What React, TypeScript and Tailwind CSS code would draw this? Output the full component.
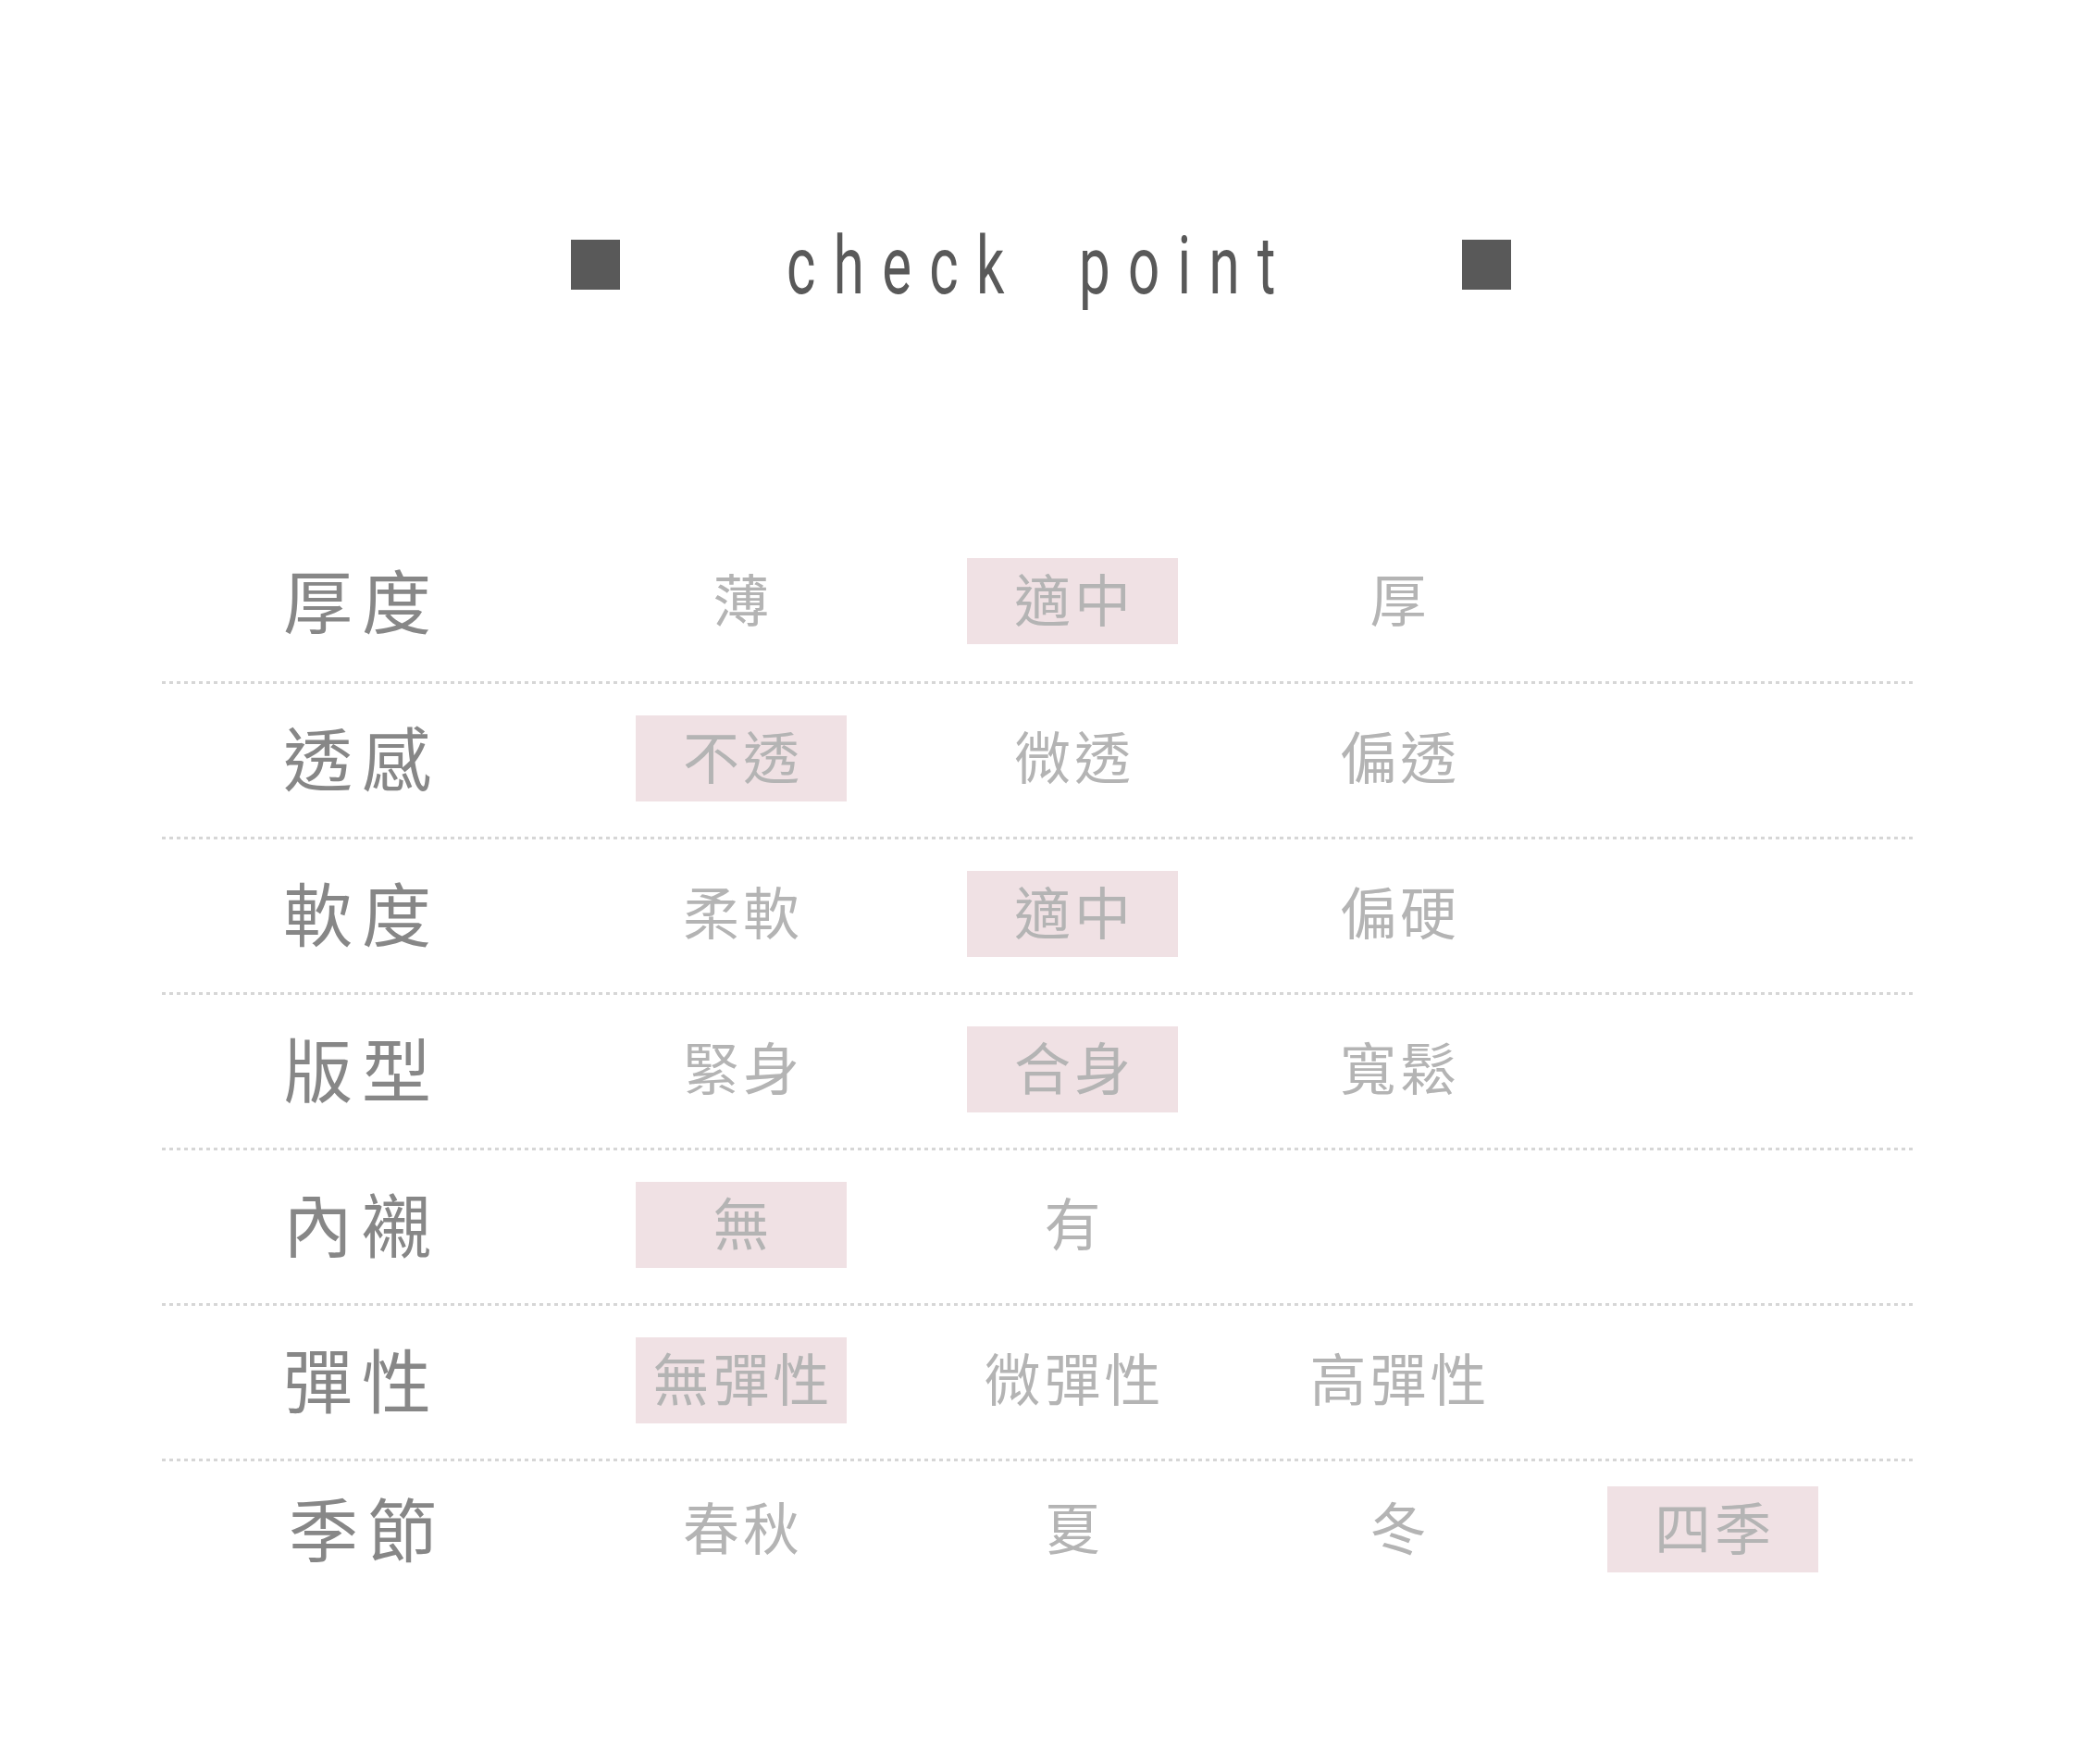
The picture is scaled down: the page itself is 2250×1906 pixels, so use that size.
import React from 'react';

type Row = {
  label: string;
  options: string[];
  selected: number;
  last?: boolean;
};

const rows: Row[] = [
  { label: '厚度', options: ['薄', '適中', '厚'], selected: 1 },
  { label: '透感', options: ['不透', '微透', '偏透'], selected: 0 },
  { label: '軟度', options: ['柔軟', '適中', '偏硬'], selected: 1 },
  { label: '版型', options: ['緊身', '合身', '寬鬆'], selected: 1 },
  { label: '內襯', options: ['無', '有'], selected: 0 },
  { label: '彈性', options: ['無彈性', '微彈性', '高彈性'], selected: 0 },
  { label: '季節', options: ['春秋', '夏', '冬', '四季'], selected: 3, last: true },
];

const cjk = "font-['Noto_Sans_CJK_TC','Noto_Sans_CJK_SC',sans-serif]";

const App: React.FC = () => {
  return (
    <div className="w-[2250px] min-h-[1906px] bg-white">
      {/* Title */}
      <div className="h-[571px] pt-[259px] flex justify-center items-start">
        <div className="w-[53px] h-[54px] bg-[#595959]"></div>
        <div className="w-[910px] h-[54px] pl-[180px]">
          <div className="-mt-[15px] origin-left scale-x-[0.69] whitespace-nowrap font-['Roboto',sans-serif] font-normal text-[87px] leading-none tracking-[28px] [word-spacing:39px] text-[#595959]">
            check point
          </div>
        </div>
        <div className="w-[53px] h-[54px] bg-[#595959]"></div>
      </div>

      {/* Check list */}
      <div className="ml-[175px] w-[1896px]">
        {rows.map((row, idx) => (
          <div key={row.label}>
            <div
              className={`grid grid-cols-[512px_358px_352px_340px_228px] items-center ${
                row.last ? 'h-[150px]' : 'h-[165px]'
              } ${idx === 0 ? 'pb-[8px]' : 'pb-[4px]'}`}
            >
              <div
                className={`${cjk} text-[75px] leading-none tracking-[10px] text-[#878787] pb-[6px] ${
                  row.last ? 'pl-[137px]' : 'pl-[131px]'
                }`}
              >
                {row.label}
              </div>
              {row.options.map((opt, i) => (
                <div key={i}>
                  <div
                    className={`w-[228px] h-[93px] pl-[4px] pb-[8px] flex items-center justify-center ${cjk} text-[61px] leading-none tracking-[4px] text-[#b4b4b4] ${
                      i === row.selected ? 'bg-[#f0e1e4]' : ''
                    }`}
                  >
                    {opt}
                  </div>
                </div>
              ))}
            </div>
            {!row.last && (
              <div className="h-[3px] bg-[repeating-linear-gradient(90deg,#d6d6d6_0px,#d6d6d6_4px,transparent_4px,transparent_8px)]"></div>
            )}
          </div>
        ))}
      </div>
    </div>
  );
};

export default App;
